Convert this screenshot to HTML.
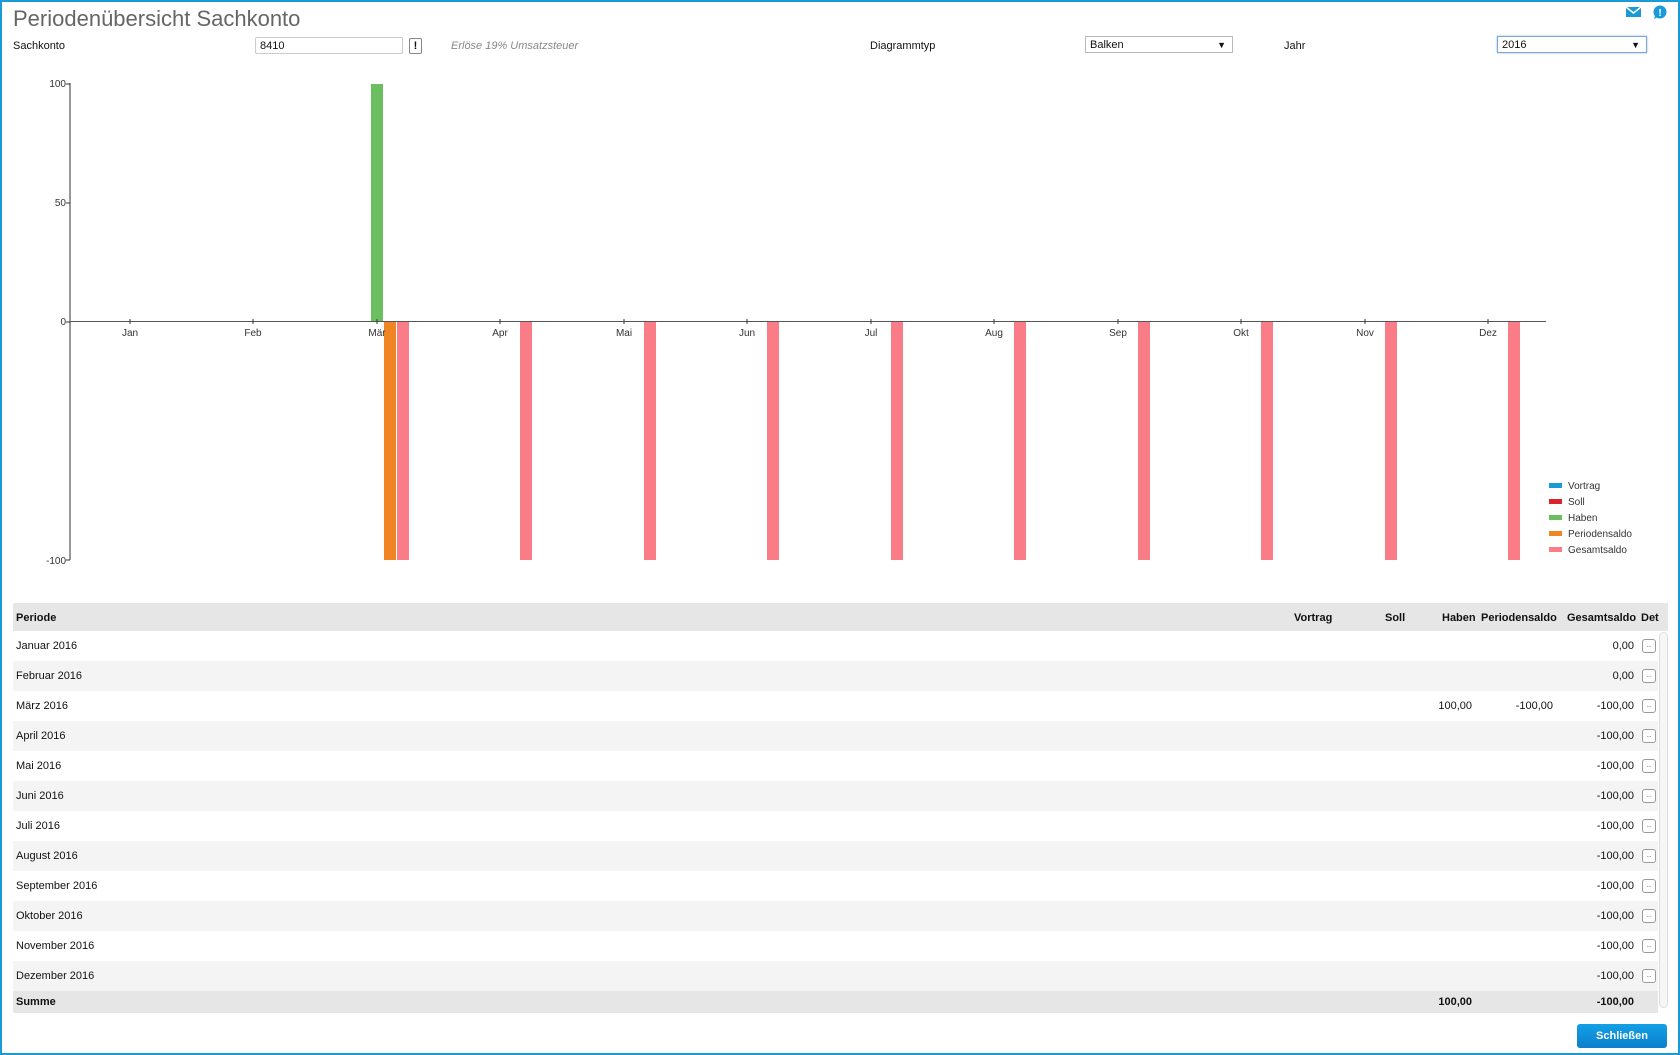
<!DOCTYPE html>
<html><head><meta charset="utf-8"><style>
*{margin:0;padding:0;box-sizing:border-box}
body{width:1680px;height:1055px;overflow:hidden;background:#fff;font-family:"Liberation Sans",Arial,sans-serif;font-size:11px;color:#111;position:relative}
.frame{position:absolute;left:0;top:0;width:1680px;height:1055px;border:2px solid #1a9ad6}
.abs{position:absolute;white-space:nowrap}
.title{left:13px;top:6px;font-size:22px;color:#666}
.inp{border:1px solid #ccc;border-radius:2px;background:#fff;height:17px;padding:1px 4px;font-size:11px;line-height:14px}
.sel{border:1px solid #bbb;background:#fff;height:17px;padding:1px 4px;font-size:11px;line-height:14px}
.row{position:absolute;left:13px;width:1645px;height:30px}
.row span{position:absolute;top:9px}
.btn{position:absolute;left:1629px;top:8px;width:14px;height:14px;border:1px solid #999;border-radius:3px;background:#fff;font-size:8px;line-height:9px;text-align:center;color:#555}
</style></head><body>
<div class="frame"></div>
<div class="abs title">Periodenübersicht Sachkonto</div>
<svg class="abs" style="left:1626px;top:6px" width="16" height="12"><rect x="0" y="1" width="15" height="10" fill="#1a9ad6"/><path d="M0 1 L7.5 7 L15 1" stroke="#fff" stroke-width="1.5" fill="none"/></svg>
<svg class="abs" style="left:1652px;top:5px" width="16" height="15"><circle cx="8" cy="7" r="6.5" fill="#1a9ad6"/><path d="M3 11 L2 14 L6 12z" fill="#1a9ad6"/><text x="8" y="11" font-size="10" font-weight="bold" fill="#fff" text-anchor="middle" font-family="Liberation Sans">!</text></svg>
<div class="abs" style="left:13px;top:40px">Sachkonto</div>
<div class="abs inp" style="left:255px;top:37px;width:148px">8410</div>
<div class="abs" style="left:409px;top:38px;width:13px;height:16px;border:1px solid #888;border-radius:2px;font-weight:bold;font-size:11px;text-align:center;line-height:14px">!</div>
<div class="abs" style="left:451px;top:40px;font-style:italic;color:#888;font-size:11px">Erlöse 19% Umsatzsteuer</div>
<div class="abs" style="left:870px;top:40px;font-size:11px">Diagrammtyp</div>
<div class="abs sel" style="left:1085px;top:36px;width:148px">Balken<span style="position:absolute;right:6px;font-size:9px">▼</span></div>
<div class="abs" style="left:1284px;top:40px;font-size:11px">Jahr</div>
<div class="abs sel" style="left:1497px;top:36px;width:150px;border:1px solid #7aa6e0;box-shadow:0 0 2px #9bc">2016<span style="position:absolute;right:6px;font-size:9px">▼</span></div>

<svg class="abs" style="left:0;top:0" width="1680" height="600" font-family="Liberation Sans" font-size="10">
<line x1="70" y1="83" x2="70" y2="560" stroke="#333"/>
<line x1="66" y1="84" x2="70" y2="84" stroke="#333"/><text x="66" y="87" text-anchor="end" fill="#333">100</text>
<line x1="66" y1="203" x2="70" y2="203" stroke="#333"/><text x="66" y="206" text-anchor="end" fill="#333">50</text>
<line x1="66" y1="322" x2="70" y2="322" stroke="#333"/><text x="66" y="325" text-anchor="end" fill="#333">0</text>
<line x1="66" y1="560" x2="70" y2="560" stroke="#333"/><text x="66" y="564" text-anchor="end" fill="#333">-100</text>
<rect x="371" y="84" width="12" height="238" fill="#6cbf60"/>
<rect x="384" y="322" width="12" height="238" fill="#f08526"/>
<g fill="#f97c86">
<rect x="397" y="322" width="12" height="238"/><rect x="520" y="322" width="12" height="238"/><rect x="644" y="322" width="12" height="238"/><rect x="767" y="322" width="12" height="238"/><rect x="891" y="322" width="12" height="238"/><rect x="1014" y="322" width="12" height="238"/><rect x="1138" y="322" width="12" height="238"/><rect x="1261" y="322" width="12" height="238"/><rect x="1385" y="322" width="12" height="238"/><rect x="1508" y="322" width="12" height="238"/>
</g>
<line x1="70" y1="321.5" x2="1546" y2="321.5" stroke="#555"/>
<g fill="#333" text-anchor="middle">
<text x="130" y="336">Jan</text><text x="253" y="336">Feb</text><text x="377" y="336">Mär</text><text x="500" y="336">Apr</text><text x="624" y="336">Mai</text><text x="747" y="336">Jun</text><text x="871" y="336">Jul</text><text x="994" y="336">Aug</text><text x="1118" y="336">Sep</text><text x="1241" y="336">Okt</text><text x="1365" y="336">Nov</text><text x="1488" y="336">Dez</text>
</g>
<g stroke="#333"><line x1="130" y1="319" x2="130" y2="324"/><line x1="253" y1="319" x2="253" y2="324"/><line x1="377" y1="319" x2="377" y2="324"/><line x1="500" y1="319" x2="500" y2="324"/><line x1="624" y1="319" x2="624" y2="324"/><line x1="747" y1="319" x2="747" y2="324"/><line x1="871" y1="319" x2="871" y2="324"/><line x1="994" y1="319" x2="994" y2="324"/><line x1="1118" y1="319" x2="1118" y2="324"/><line x1="1241" y1="319" x2="1241" y2="324"/><line x1="1365" y1="319" x2="1365" y2="324"/><line x1="1488" y1="319" x2="1488" y2="324"/></g>
<g fill="#333">
<rect x="1549" y="483" width="13" height="5" fill="#1a9ad6"/><text x="1568" y="489">Vortrag</text>
<rect x="1549" y="499" width="13" height="5" fill="#d9252a"/><text x="1568" y="505">Soll</text>
<rect x="1549" y="515" width="13" height="5" fill="#6cbf60"/><text x="1568" y="521">Haben</text>
<rect x="1549" y="531" width="13" height="5" fill="#f08526"/><text x="1568" y="537">Periodensaldo</text>
<rect x="1549" y="547" width="13" height="5" fill="#f97c86"/><text x="1568" y="553">Gesamtsaldo</text>
</g>
</svg>

<div class="row" style="top:603px;height:28px;background:#e6e6e6;width:1655px;font-weight:bold">
<span style="left:3px">Periode</span>
<span style="left:1281px">Vortrag</span><span style="left:1372px">Soll</span><span style="left:1429px">Haben</span><span style="left:1468px">Periodensaldo</span><span style="left:1554px">Gesamtsaldo</span><span style="left:1628px">Det</span>
</div>
<div class="row" style="top:631px"><span style="left:3px">Januar 2016</span><span style="right:24px">0,00</span><div class="btn">..</div></div>
<div class="row" style="top:661px;background:#f4f4f4"><span style="left:3px">Februar 2016</span><span style="right:24px">0,00</span><div class="btn">..</div></div>
<div class="row" style="top:691px"><span style="left:3px">März 2016</span><span style="right:186px">100,00</span><span style="right:105px">-100,00</span><span style="right:24px">-100,00</span><div class="btn">..</div></div>
<div class="row" style="top:721px;background:#f4f4f4"><span style="left:3px">April 2016</span><span style="right:24px">-100,00</span><div class="btn">..</div></div>
<div class="row" style="top:751px"><span style="left:3px">Mai 2016</span><span style="right:24px">-100,00</span><div class="btn">..</div></div>
<div class="row" style="top:781px;background:#f4f4f4"><span style="left:3px">Juni 2016</span><span style="right:24px">-100,00</span><div class="btn">..</div></div>
<div class="row" style="top:811px"><span style="left:3px">Juli 2016</span><span style="right:24px">-100,00</span><div class="btn">..</div></div>
<div class="row" style="top:841px;background:#f4f4f4"><span style="left:3px">August 2016</span><span style="right:24px">-100,00</span><div class="btn">..</div></div>
<div class="row" style="top:871px"><span style="left:3px">September 2016</span><span style="right:24px">-100,00</span><div class="btn">..</div></div>
<div class="row" style="top:901px;background:#f4f4f4"><span style="left:3px">Oktober 2016</span><span style="right:24px">-100,00</span><div class="btn">..</div></div>
<div class="row" style="top:931px"><span style="left:3px">November 2016</span><span style="right:24px">-100,00</span><div class="btn">..</div></div>
<div class="row" style="top:961px;background:#f4f4f4"><span style="left:3px">Dezember 2016</span><span style="right:24px">-100,00</span><div class="btn">..</div></div>
<div class="row" style="top:991px;height:22px;background:#e6e6e6;font-weight:bold"><span style="left:3px;top:5px">Summe</span><span style="right:186px;top:5px">100,00</span><span style="right:24px;top:5px">-100,00</span></div>
<div class="abs" style="left:1659px;top:632px;width:9px;height:376px;border:1px solid #ddd;border-radius:5px;background:#f6f6f6"></div>
<div class="abs" style="left:1577px;top:1024px;width:90px;height:24px;border-radius:3px;background:linear-gradient(#14a0e6,#0a7fcc);color:#fff;font-weight:bold;font-size:11px;text-align:center;line-height:24px">Schließen</div>
</body></html>
